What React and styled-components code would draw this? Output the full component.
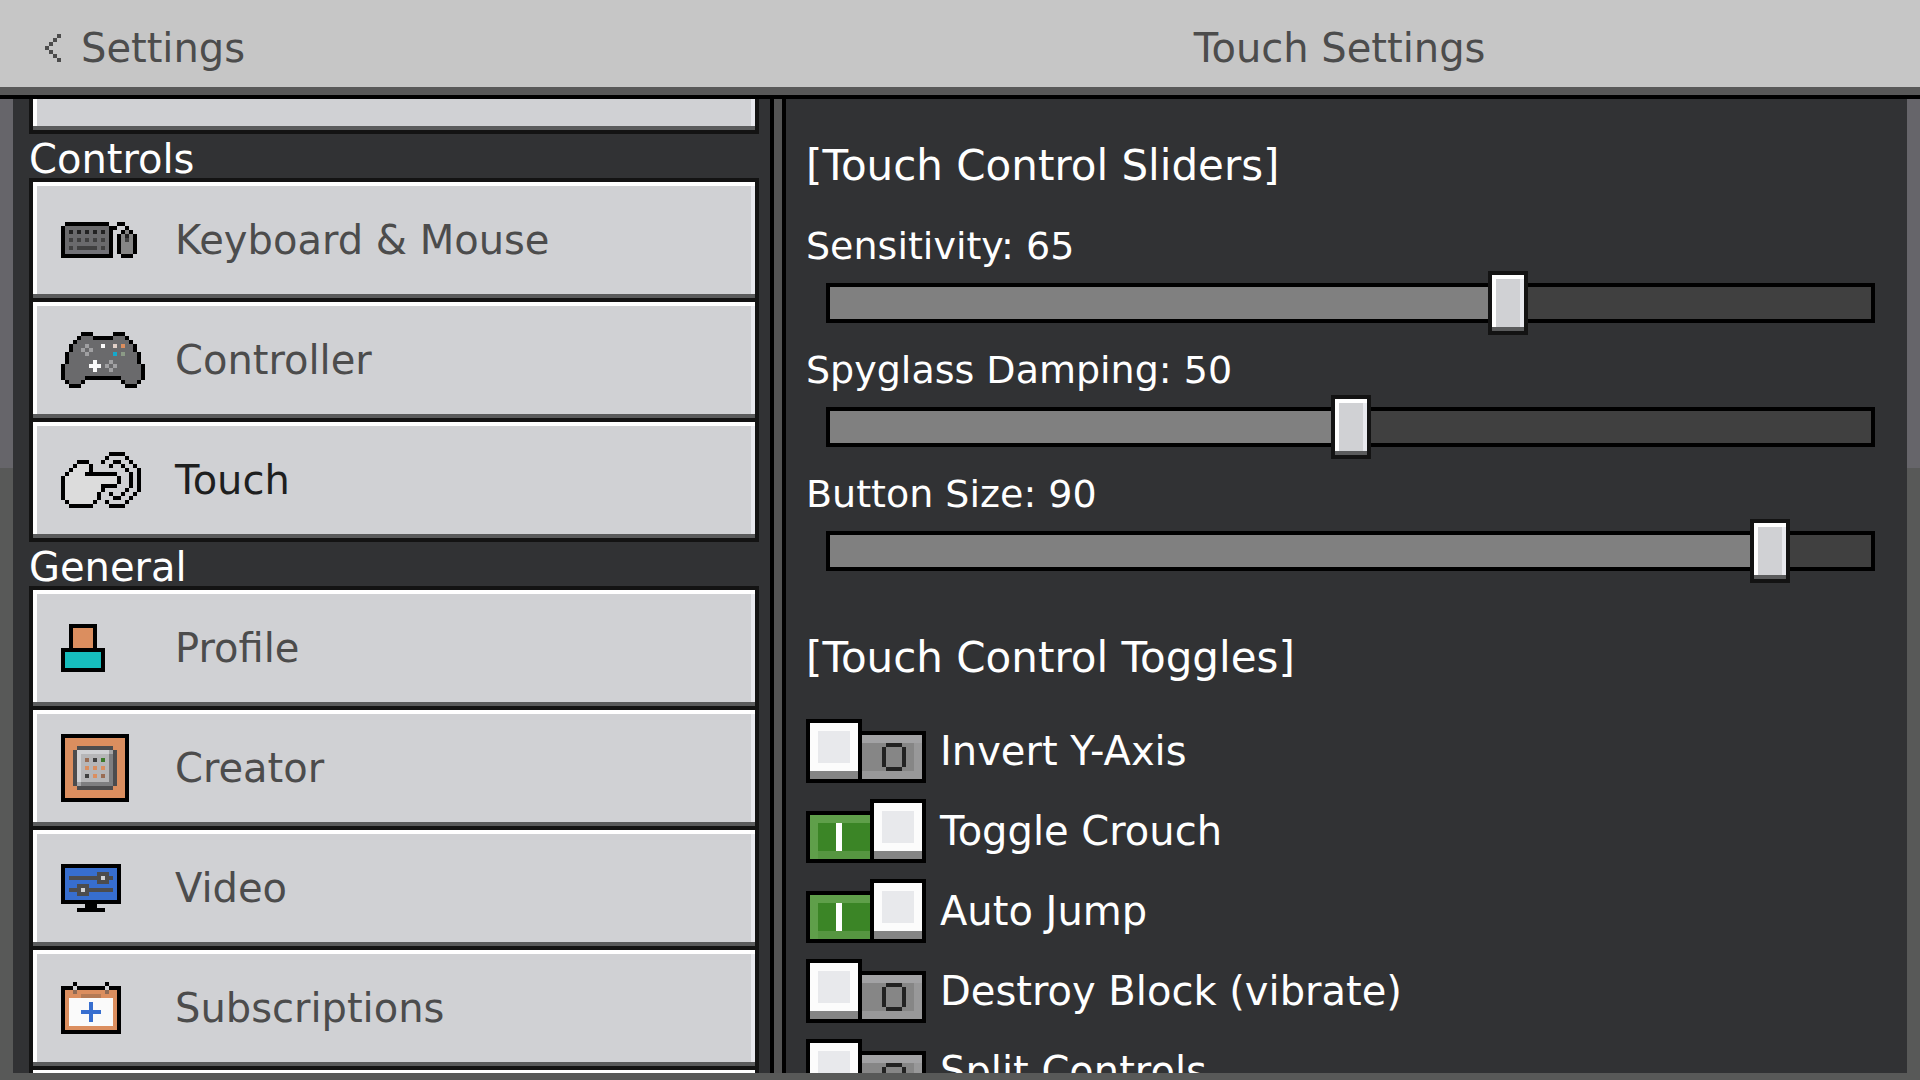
import { useLayoutEffect, useRef, useState } from 'react';
import styled, { createGlobalStyle } from 'styled-components';

const GlobalStyle = createGlobalStyle`
  *, *::before, *::after {
    box-sizing: border-box;
  }

  body {
    margin: 0;
    background: #585858;
    font-family: 'DejaVu Sans', sans-serif;
    font-size: 40px;
    line-height: 50px;
  }

  button {
    font: inherit;
    color: inherit;
    cursor: pointer;
  }
`;

// ===== Layout

const Screen = styled.div`
  display: flex;
  flex-direction: column;
  height: 100vh;
  padding-bottom: 7px;
  overflow: hidden;
  background: linear-gradient(#66656a 468px, #585958 468px);
`;

const Header = styled.header`
  display: grid;
  grid-template-columns: 761fr 1125fr;
  column-gap: 8px;
  flex: none;
  align-items: center;
  height: 99px;
  padding: 0 20px 0 13px;
  background: #c6c6c6;
  border-bottom: 4px solid #000;
  box-shadow: inset 0 -8px 0 #585858;
  color: #4c4c4c;
`;

const BackButton = styled.button`
  display: flex;
  align-items: center;
  justify-self: start;
  gap: 20px;
  padding: 0 32px;
  background: none;
  border: none;
`;

const Title = styled.h1`
  margin: 0;
  font-size: 40px;
  font-weight: normal;
  text-align: center;
`;

const Body = styled.div`
  display: grid;
  grid-template-columns: 761fr 1125fr;
  column-gap: 8px;
  flex: 1;
  min-height: 0;
  margin: 0 13px;
  background: #545454;
`;

const Sidebar = styled.nav`
  min-height: 0;
  padding: 0 11px 0 16px;
  overflow-y: auto;
  scrollbar-width: none;
  background: #313234;
  border-right: 4px solid #000;
`;

const Panel = styled.main`
  min-height: 0;
  padding: 42px 32px 0 20px;
  overflow-y: auto;
  scrollbar-width: none;
  background: #313234;
  border-left: 4px solid #000;
  color: #fff;
`;

// ===== Sidebar

const GroupTitle = styled.h2`
  height: 44px;
  margin: 0;
  font-size: 40px;
  line-height: 50px;
  font-weight: normal;
  color: #fff;
`;

const NavButton = styled.button`
  display: flex;
  align-items: center;
  width: 100%;
  height: 124px;
  padding: 0 28px;
  background: #d0d1d4;
  border: 4px solid #131313;
  box-shadow: inset 0 -4px 0 #5a5b5c, inset 4px 4px 0 #fff, inset -4px 0 0 #e8e9ee;
  color: ${({ $active }) => ($active ? '#1e1f1f' : '#4c4c4c')};

  & + & {
    margin-top: -4px;
  }
`;

const IconSlot = styled.span`
  display: flex;
  width: 114px;
`;

// ===== Sliders

const SectionTitle = styled.h2`
  margin: 0 0 20px;
  font-size: 42px;
  font-weight: normal;
`;

const SliderList = styled.div`
  margin-bottom: 62px;
`;

const SliderLabel = styled.label`
  display: block;
  padding-top: 10px;
  font-size: 38px;
`;

const SliderTrack = styled.div`
  display: flex;
  align-items: center;
  height: 40px;
  margin: 12px 0 12px 20px;
  background: #404040;
  border: 4px solid #000;
`;

// Runs half a thumb past both track ends, so the thumb centre marks the value
const SliderInput = styled.input`
  flex: 1;
  min-width: 0;
  height: 64px;
  margin: 0 -24px;
  appearance: none;
  background: transparent;
  cursor: pointer;

  &::-webkit-slider-thumb {
    appearance: none;
    width: 40px;
    height: 64px;
    background: #d0d1d4;
    border: 4px solid #131313;
    box-shadow: inset 0 -4px 0 #5a5b5c, inset 4px 4px 0 #fff, inset -4px 0 0 #e8e9ee;
  }
`;

// ===== Toggles

const ToggleList = styled.div`
  display: flex;
  flex-direction: column;
  gap: 16px;
  padding-top: 16px;
`;

const ToggleRow = styled.label`
  display: flex;
  align-items: center;
  gap: 14px;
  height: 64px;
  cursor: pointer;
`;

const Switch = styled.span`
  display: flex;
  flex-direction: ${({ $on }) => ($on ? 'row-reverse' : 'row')};
  align-items: flex-end;
  position: relative;
  width: 120px;
  height: 64px;
`;

const SwitchInput = styled.input`
  position: absolute;
  inset: 0;
  width: 100%;
  height: 100%;
  margin: 0;
  opacity: 0;
  cursor: pointer;
`;

const SwitchKnob = styled.span`
  width: 56px;
  height: 64px;
  background: #e8e9ec;
  border: 4px solid #000;
  box-shadow: inset 0 -8px 0 #858585, inset 8px 8px 0 #fcfcfc, inset -8px -16px 0 #fcfcfc;
`;

const SwitchGroove = styled.span`
  display: flex;
  flex: 1;
  align-items: center;
  height: 52px;
  padding-left: ${({ $on }) => ($on ? '26px' : '20px')};
  background: ${({ $on }) => ($on ? '#3b8526' : '#868686')};
  border: 4px solid #000;
  border-left-width: ${({ $on }) => ($on ? '4px' : '0')};
  border-right-width: ${({ $on }) => ($on ? '0' : '4px')};
  box-shadow: ${({ $on }) =>
    $on
      ? 'inset 8px 8px 0 #5f9f4a, inset 0 -8px 0 #569641'
      : 'inset 0 8px 0 #a2a2a4, inset -8px -8px 0 #989899'};
`;

const OnMark = styled.span`
  width: 6px;
  height: 28px;
  background: #fff;
`;

// ===== Pixel icons: one character per 4px cell, '.' stays empty

const CELL = 4;

const PALETTE = {
  K: '#000000',
  C: '#4c4c4c',
  D: '#4c4c4e',
  g: '#6a6a6c',
  p: '#717177',
  m: '#858585',
  d: '#222222',
  e: '#404040',
  l: '#a0a0a2',
  s: '#e0d0c8',
  w: '#fafafa',
  o: '#db8e5f',
  c: '#14a9cc',
  n: '#8b9a86',
  h: '#dcdcdc',
  t: '#16bcbc',
  L: '#d0d1d4',
  a: '#b6b6b8',
  y: '#a6a6a8',
  x: '#7e7e80',
  b: '#996d55',
  G: '#3b7a2a',
  B: '#376ecf',
  r: '#8f6a55',
  v: '#b47a55',
};

const CHEVRON = ['...C', '..C.', '.C..', 'C...', '.C..', '..C.', '...C'];

const ZERO = ['.dddd.', 'd....d', 'd....d', 'd....d', 'd....d', 'd....d', '.dddd.'];

const KEYBOARD = [
  '.KKKKKKKKKKK..KK...',
  'KgggggggggggKK..K..',
  'KgdgdgdgdgdgK..KmK.',
  'KgggggggggggK.KmdmK',
  'KgegegegegegK.KmemK',
  'KgggggggggggK.KmmmK',
  'KgegeeeeegegK.KmmmK',
  'KpppppppppppK.KmmmK',
  'KKKKKKKKKKKKK..KKK.',
];

const CONTROLLER = [
  '.....KKK.....KKK.....',
  '....KgggKKKKKgggK....',
  '...KgggggggggggggK...',
  '..KggglgggwggsgoggK..',
  '..KgglglggggggggggK..',
  '.KgggglggggggcgngggK.',
  '.KgggggggggggggggggK.',
  '.KggggggwggglggggggK.',
  'KggggggwwwglglggggggK',
  'KgggggggwggglgggggggK',
  'KgggggggggggggggggggK',
  'KgggggKKKKKKKKKgggggK',
  '.KgggK.........KgggK.',
  '..KKK...........KKK..',
];

const TOUCH = [
  '............KKKK....',
  '...........K....K...',
  '....KKK...K..KK..K..',
  '...KhhhK....K..K..K.',
  '..KhhhhK........K..K',
  '.KhhhhKKKKKKKK...K.K',
  'KhhhhhhhhhhhhhK..K.K',
  'KhhhhhhhhhhhhhK..K.K',
  'KhhhhhhhhhKKKK...K.K',
  'KhhhhhhhhhK.....K..K',
  'KhhhhhhhhK..K..K..K.',
  'KhhhhhhhhK...KK..K..',
  '.KhhhhhhK..K....K...',
  '..KKKKKK....KKKK....',
];

const PROFILE = [
  '..KKKKKKK..',
  '..KoooooK..',
  '..KoooooK..',
  '..KoooooK..',
  '..KoooooK..',
  '..KoooooK..',
  'KKKKKKKKKKK',
  'KtttttttttK',
  'KtttttttttK',
  'KtttttttttK',
  'KtttttttttK',
  'KKKKKKKKKKK',
];

const CREATOR = [
  'KKKKKKKKKKKKKKKKK',
  'KoooooooooooooooK',
  'KoooooooooooooooK',
  'KoooDDDDDDDDDoooK',
  'KooDLLLLLLLLyDooK',
  'KooDLaaaaaaaxDooK',
  'KooDLabaeaGaxDooK',
  'KooDLaaaaaaaxDooK',
  'KooDLaoaoaoaxDooK',
  'KooDLaaaaaaaxDooK',
  'KooDLaeaoabaxDooK',
  'KooDLaaaaaaaxDooK',
  'KooDyxxxxxxxxDooK',
  'KoooDDDDDDDDDoooK',
  'KoooooooooooooooK',
  'KoooooooooooooooK',
  'KKKKKKKKKKKKKKKKK',
];

const VIDEO = [
  'KKKKKKKKKKKKKKK',
  'KBBBBBBBBBBBBBK',
  'KBBBBBBBBDDDBBK',
  'KBDDDDDDDDLDDBK',
  'KBBBBBBBBDDDBBK',
  'KBBBDDDBBBBBBBK',
  'KBDDDLDDDDDDDBK',
  'KBBBDDDBBBBBBBK',
  'KBBBBBBBBBBBBBK',
  'KKKKKKKKKKKKKKK',
  '......KKK......',
  '....KKKKKKK....',
];

const SUBSCRIPTIONS = [
  '...K.......K...',
  'KKKLKKKKKKKLKKK',
  'KoorooooooorooK',
  'KoooovvvvvooooK',
  'KowwwwwwwwwwwoK',
  'KowwwwwBwwwwwoK',
  'KowwwwwBwwwwwoK',
  'KowwwBBBBBwwwoK',
  'KowwwwwBwwwwwoK',
  'KowwwwwBwwwwwoK',
  'KowwwwwwwwwwwoK',
  'KoooooooooooooK',
  'KKKKKKKKKKKKKKK',
];

function PixelIcon({ rows }) {
  const width = rows[0].length;
  const height = rows.length;

  return (
    <svg
      width={width * CELL}
      height={height * CELL}
      viewBox={`0 0 ${width} ${height}`}
      shapeRendering="crispEdges"
      aria-hidden="true"
    >
      {rows.flatMap((row, y) =>
        [...row].map((cell, x) =>
          cell === '.' ? null : (
            <rect key={`${x}-${y}`} x={x} y={y} width="1" height="1" fill={PALETTE[cell]} />
          )
        )
      )}
    </svg>
  );
}

// ===== Content

const NAV_GROUPS = [
  {
    title: 'Controls',
    items: [
      { label: 'Keyboard & Mouse', icon: KEYBOARD },
      { label: 'Controller', icon: CONTROLLER },
      { label: 'Touch', icon: TOUCH },
    ],
  },
  {
    title: 'General',
    items: [
      { label: 'Profile', icon: PROFILE },
      { label: 'Creator', icon: CREATOR },
      { label: 'Video', icon: VIDEO },
      { label: 'Subscriptions', icon: SUBSCRIPTIONS },
      { label: '' },
    ],
  },
];

const SLIDERS = [
  { id: 'sensitivity', label: 'Sensitivity', value: 65 },
  { id: 'spyglass', label: 'Spyglass Damping', value: 50 },
  { id: 'button-size', label: 'Button Size', value: 90 },
];

const TOGGLES = [
  { label: 'Invert Y-Axis', on: false },
  { label: 'Toggle Crouch', on: true },
  { label: 'Auto Jump', on: true },
  { label: 'Destroy Block (vibrate)', on: false },
  { label: 'Split Controls', on: false },
];

const SIDEBAR_SCROLL = 89;

function Slider({ id, label, initial }) {
  const [value, setValue] = useState(initial);

  return (
    <div>
      <SliderLabel htmlFor={id}>
        {label}: {value}
      </SliderLabel>
      <SliderTrack
        style={{ backgroundImage: `linear-gradient(to right, #808080 ${value}%, transparent ${value}%)` }}
      >
        <SliderInput
          id={id}
          type="range"
          min="0"
          max="100"
          value={value}
          onChange={(e) => setValue(Number(e.target.value))}
        />
      </SliderTrack>
    </div>
  );
}

function Toggle({ label, initial }) {
  const [on, setOn] = useState(initial);

  return (
    <ToggleRow>
      <Switch $on={on}>
        <SwitchKnob />
        <SwitchGroove $on={on}>{on ? <OnMark /> : <PixelIcon rows={ZERO} />}</SwitchGroove>
        <SwitchInput type="checkbox" checked={on} onChange={() => setOn(!on)} />
      </Switch>
      {label}
    </ToggleRow>
  );
}

export default function App() {
  const [active, setActive] = useState('Touch');
  const sidebarRef = useRef(null);

  useLayoutEffect(() => {
    sidebarRef.current.scrollTop = SIDEBAR_SCROLL;
  }, []);

  return (
    <>
      <GlobalStyle />
      <Screen>
        <Header>
          <BackButton type="button">
            <PixelIcon rows={CHEVRON} />
            Settings
          </BackButton>
          <Title>Touch Settings</Title>
        </Header>
        <Body>
          <Sidebar ref={sidebarRef}>
            <NavButton type="button" />
            {NAV_GROUPS.map((group) => (
              <section key={group.title}>
                <GroupTitle>{group.title}</GroupTitle>
                {group.items.map((item) => (
                  <NavButton
                    key={item.label}
                    type="button"
                    $active={item.label === active}
                    onClick={() => setActive(item.label)}
                  >
                    <IconSlot>{item.icon && <PixelIcon rows={item.icon} />}</IconSlot>
                    {item.label}
                  </NavButton>
                ))}
              </section>
            ))}
          </Sidebar>
          <Panel>
            <SectionTitle>[Touch Control Sliders]</SectionTitle>
            <SliderList>
              {SLIDERS.map((slider) => (
                <Slider key={slider.id} id={slider.id} label={slider.label} initial={slider.value} />
              ))}
            </SliderList>
            <SectionTitle>[Touch Control Toggles]</SectionTitle>
            <ToggleList>
              {TOGGLES.map((toggle) => (
                <Toggle key={toggle.label} label={toggle.label} initial={toggle.on} />
              ))}
            </ToggleList>
          </Panel>
        </Body>
      </Screen>
    </>
  );
}
